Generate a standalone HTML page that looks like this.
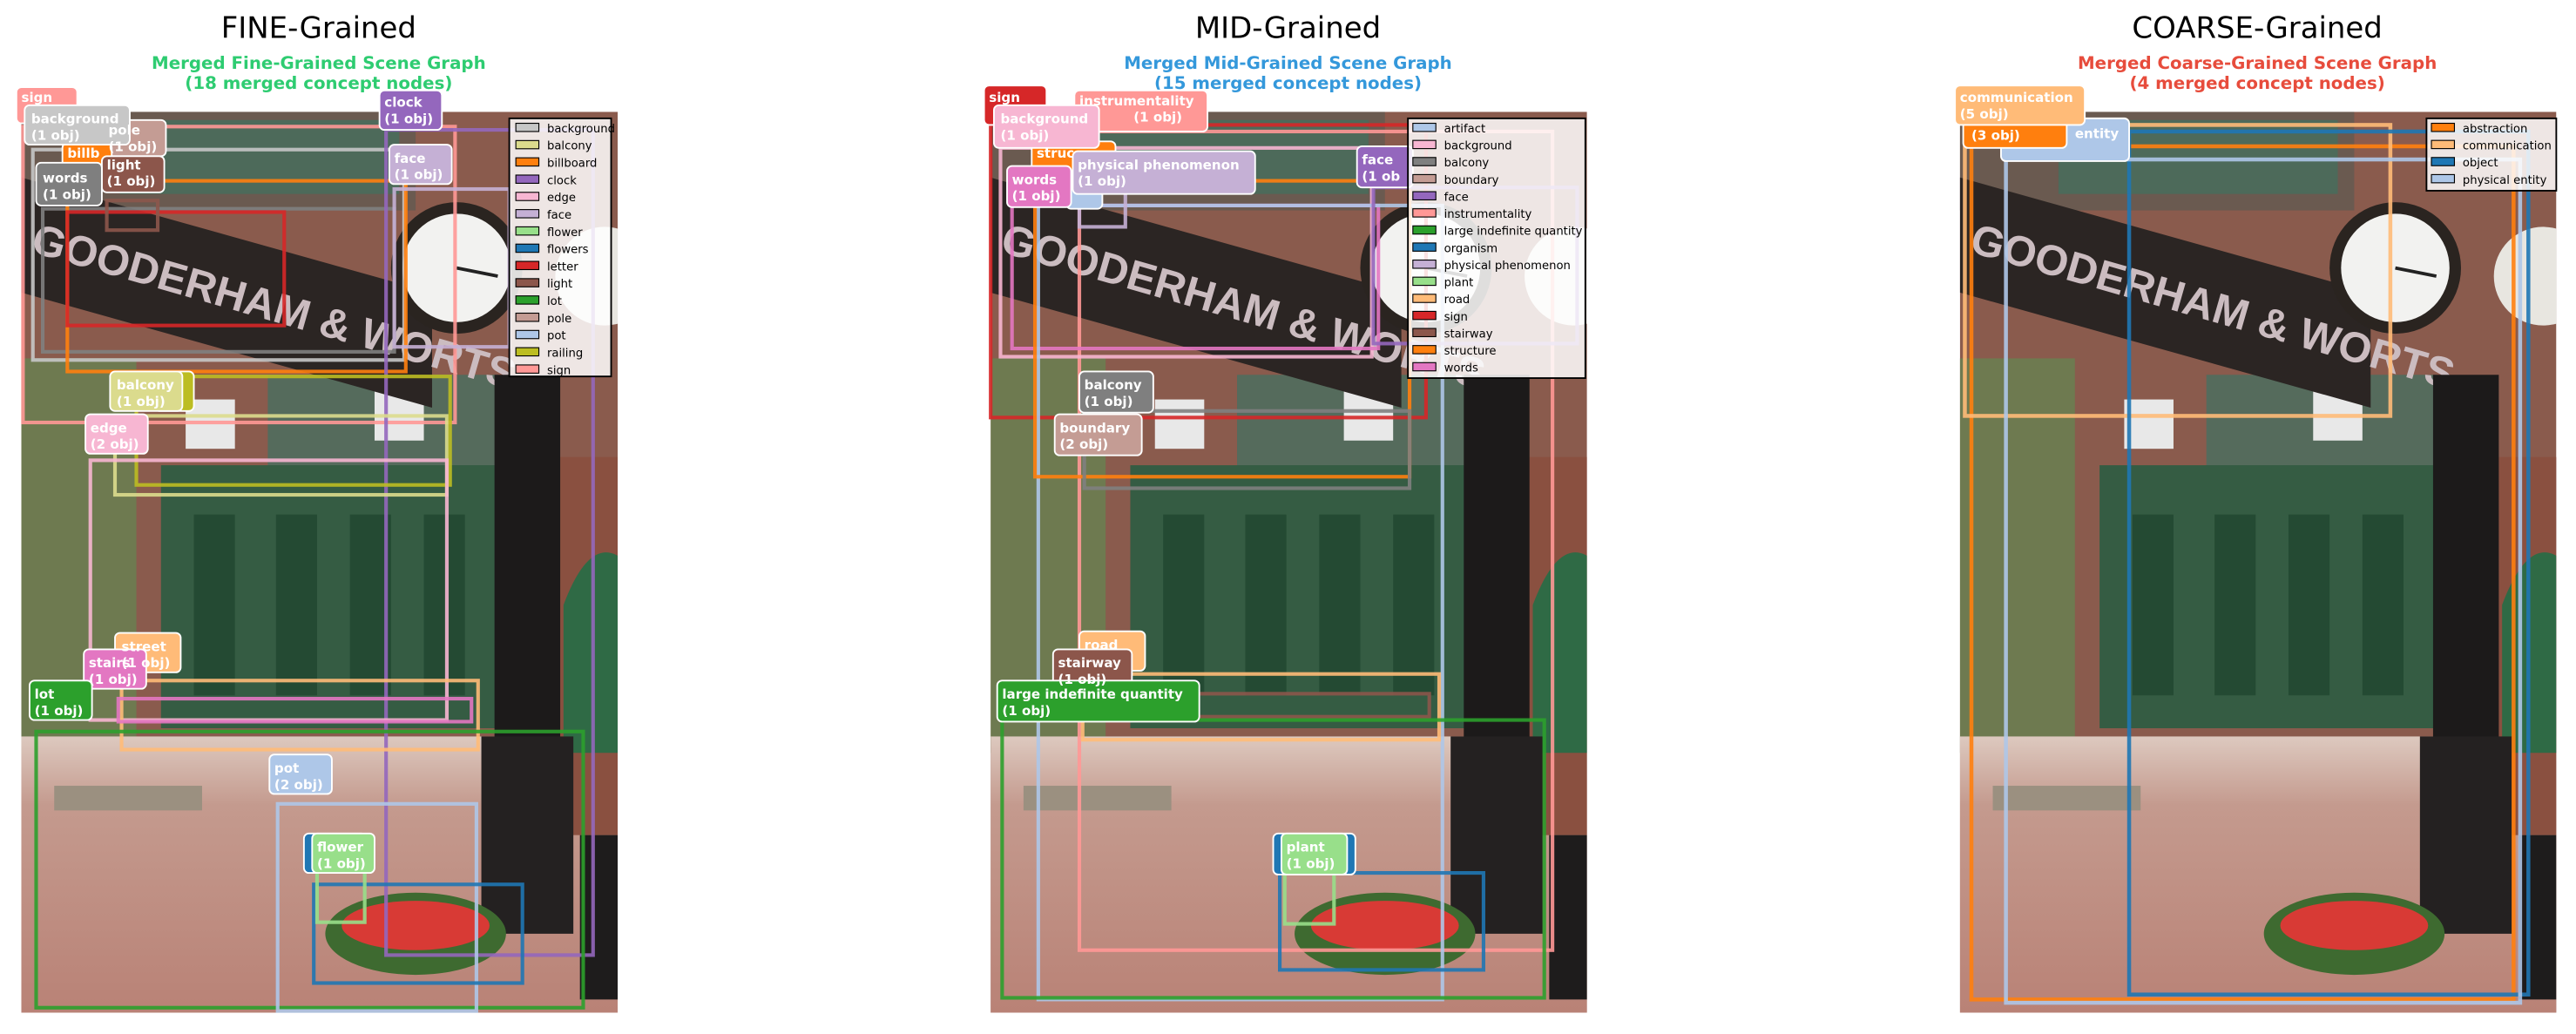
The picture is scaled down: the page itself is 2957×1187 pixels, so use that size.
<!DOCTYPE html>
<html><head><meta charset="utf-8"><style>html,body{margin:0;padding:0;background:#fff}svg{display:block}</style></head><body>
<svg width="2957" height="1187" viewBox="0 0 1568 629" preserveAspectRatio="none" xmlns="http://www.w3.org/2000/svg" font-family="DejaVu Sans, Liberation Sans, sans-serif">
<defs>
<linearGradient id="pave" x1="0" y1="0" x2="0" y2="1"><stop offset="0" stop-color="#ddc9bf"/><stop offset="0.25" stop-color="#c49a8e"/><stop offset="1" stop-color="#b98276"/></linearGradient>
<clipPath id="pc"><rect x="0" y="0" width="363" height="548"/></clipPath>
<g id="photo">
<g clip-path="url(#pc)">
<rect x="0" y="0" width="363" height="548" fill="#8a5b4d"/>
<rect x="0" y="0" width="240" height="60" fill="#6a5a50"/>
<rect x="60" y="5" width="170" height="45" fill="#4d6a5a"/>
<rect x="150" y="160" width="140" height="60" fill="#556b5c"/>
<rect x="100" y="175" width="30" height="30" fill="#e8e8e8"/>
<rect x="215" y="170" width="30" height="30" fill="#e8e8e8"/>
<polygon points="0,40 250,110 250,180 0,110" fill="#2b2523"/>
<text x="5" y="85" transform="rotate(16 5 85)" font-family="Liberation Sans Narrow, Liberation Sans, sans-serif" font-weight="bold" font-size="26" fill="#cbbcc0">GOODERHAM &amp; WORTS</text>
<rect x="0" y="150" width="70" height="240" fill="#6e7a50"/>
<rect x="85" y="215" width="230" height="160" fill="#355c43"/>
<rect x="105" y="245" width="25" height="110" fill="#244a33"/>
<rect x="155" y="245" width="25" height="110" fill="#244a33"/>
<rect x="200" y="245" width="25" height="110" fill="#244a33"/>
<rect x="245" y="245" width="25" height="110" fill="#244a33"/>
<rect x="0" y="380" width="363" height="168" fill="url(#pave)"/>
<rect x="320" y="210" width="43" height="230" fill="#8a5040"/>
<path d="M330,300 q15,-40 33,-30 v120 h-33z" fill="#2f6a45"/>
<circle cx="265" cy="95" r="40" fill="#2a2420"/>
<circle cx="265" cy="95" r="33" fill="#f2f2f0"/>
<line x1="265" y1="95" x2="290" y2="100" stroke="#222" stroke-width="2"/>
<circle cx="355" cy="100" r="30" fill="#e8e6e0"/>
<rect x="288" y="160" width="40" height="320" fill="#1c1a1a"/>
<rect x="280" y="380" width="56" height="120" fill="#242121"/>
<rect x="340" y="440" width="23" height="100" fill="#1e1c1c"/>
<ellipse cx="240" cy="500" rx="55" ry="25" fill="#3e6a30"/>
<ellipse cx="240" cy="495" rx="45" ry="15" fill="#d83a35"/>
<rect x="20" y="410" width="90" height="15" fill="#9b9080"/>
</g>
</g>
</defs>

<!-- Titles -->
<text x="194" y="23" font-size="18" text-anchor="middle" fill="#000">FINE-Grained</text>
<text x="194" y="42" font-size="10.5" font-weight="bold" text-anchor="middle" fill="#2ecc71">Merged Fine-Grained Scene Graph</text>
<text x="194" y="54" font-size="10.5" font-weight="bold" text-anchor="middle" fill="#2ecc71">(18 merged concept nodes)</text>
<text x="784" y="23" font-size="18" text-anchor="middle" fill="#000">MID-Grained</text>
<text x="784" y="42" font-size="10.5" font-weight="bold" text-anchor="middle" fill="#3498db">Merged Mid-Grained Scene Graph</text>
<text x="784" y="54" font-size="10.5" font-weight="bold" text-anchor="middle" fill="#3498db">(15 merged concept nodes)</text>
<text x="1374" y="23" font-size="18" text-anchor="middle" fill="#000">COARSE-Grained</text>
<text x="1374" y="42" font-size="10.5" font-weight="bold" text-anchor="middle" fill="#e74c3c">Merged Coarse-Grained Scene Graph</text>
<text x="1374" y="54" font-size="10.5" font-weight="bold" text-anchor="middle" fill="#e74c3c">(4 merged concept nodes)</text>

<use href="#photo" x="13" y="68"/>
<use href="#photo" x="603" y="68"/>
<use href="#photo" x="1193" y="68"/>

<!-- Panel 1 boxes -->
<g fill="none" stroke-width="2.2" stroke-opacity="0.9">
<rect x="14" y="77" width="263" height="180" stroke="#ff9896"/>
<rect x="20" y="91" width="226" height="128" stroke="#c7c7c7"/>
<rect x="26" y="127" width="214" height="87" stroke="#7f7f7f"/>
<rect x="41" y="110" width="206" height="116" stroke="#ff7f0e"/>
<rect x="41" y="129" width="132" height="69" stroke="#d62728"/>
<rect x="65" y="122" width="31" height="18" stroke="#8c564b"/>
<rect x="235" y="79" width="126" height="502" stroke="#9467bd"/>
<rect x="240" y="115" width="70" height="96" stroke="#c5b0d5"/>
<rect x="70" y="253" width="202" height="48" stroke="#dbdb8d"/>
<rect x="83" y="229" width="191" height="66" stroke="#bcbd22"/>
<rect x="55" y="280" width="217" height="158" stroke="#f7b6d2"/>
<rect x="74" y="414" width="217" height="42" stroke="#ffbb78"/>
<rect x="72" y="425" width="215" height="14" stroke="#e377c2"/>
<rect x="22" y="445" width="333" height="168" stroke="#2ca02c"/>
<rect x="169" y="489" width="121" height="126" stroke="#aec7e8"/>
<rect x="191" y="538" width="127" height="60" stroke="#1f77b4"/>
<rect x="193" y="530" width="29" height="31" stroke="#98df8a"/>
</g>
<!-- Panel 2 boxes -->
<g fill="none" stroke-width="2.2" stroke-opacity="0.9">
<rect x="603" y="76" width="265" height="178" stroke="#d62728"/>
<rect x="657" y="80" width="288" height="498" stroke="#ff9896"/>
<rect x="609" y="90" width="226" height="127" stroke="#f7b6d2"/>
<rect x="616" y="125" width="223" height="87" stroke="#e377c2"/>
<rect x="632" y="125" width="246" height="483" stroke="#aec7e8"/>
<rect x="630" y="110" width="228" height="180" stroke="#ff7f0e"/>
<rect x="657" y="117" width="28" height="21" stroke="#c5b0d5"/>
<rect x="836" y="114" width="124" height="95" stroke="#9467bd"/>
<rect x="660" y="250" width="198" height="47" stroke="#7f7f7f"/>
<rect x="659" y="410" width="217" height="40" stroke="#ffbb78"/>
<rect x="643" y="422" width="227" height="14" stroke="#8c564b"/>
<rect x="610" y="438" width="330" height="169" stroke="#2ca02c"/>
<rect x="779" y="531" width="124" height="59" stroke="#1f77b4"/>
<rect x="782" y="530" width="30" height="32" stroke="#98df8a"/>
</g>
<!-- Panel 3 boxes -->
<g fill="none" stroke-width="2.4" stroke-opacity="0.9">
<rect x="1200" y="89" width="330" height="519" stroke="#ff7f0e"/>
<rect x="1196" y="76" width="259" height="177" stroke="#ffbb78"/>
<rect x="1296" y="80" width="243" height="525" stroke="#1f77b4"/>
<rect x="1221" y="97" width="313" height="513" stroke="#aec7e8"/>
</g>

<!-- Labels -->
<g font-size="8" font-weight="bold" fill="#fff" stroke="none">
<g stroke="#fff" stroke-width="1">
<rect x="10" y="53" width="37" height="22" rx="3" fill="#ff9896"/>
<rect x="63" y="73" width="38" height="22" rx="3" fill="#c49c94"/>
<rect x="38" y="87" width="30" height="20" rx="3" fill="#ff7f0e"/>
<rect x="62" y="95" width="38" height="22" rx="3" fill="#8c564b"/>
<rect x="15" y="64" width="64" height="24" rx="3" fill="#c7c7c7"/>
<rect x="22" y="99" width="40" height="26" rx="3" fill="#7f7f7f"/>
<rect x="231" y="55" width="38" height="24" rx="3" fill="#9467bd"/>
<rect x="237" y="88" width="38" height="24" rx="3" fill="#c5b0d5"/>
<rect x="94" y="226" width="24" height="24" rx="3" fill="#bcbd22"/>
<rect x="67" y="226" width="44" height="24" rx="3" fill="#dbdb8d"/>
<rect x="52" y="252" width="38" height="24" rx="3" fill="#f7b6d2"/>
<rect x="70" y="385" width="40" height="24" rx="3" fill="#ffbb78"/>
<rect x="51" y="395" width="38" height="24" rx="3" fill="#e377c2"/>
<rect x="18" y="414" width="38" height="24" rx="3" fill="#2ca02c"/>
<rect x="164" y="459" width="38" height="24" rx="3" fill="#aec7e8"/>
<rect x="185" y="507" width="38" height="24" rx="3" fill="#1f77b4"/>
<rect x="190" y="507" width="38" height="24" rx="3" fill="#98df8a"/>
</g>
<text x="13" y="62">sign</text>
<text x="66" y="82">pole</text><text x="66" y="92">(1 obj)</text>
<text x="41" y="96">billb</text>
<text x="65" y="103">light</text><text x="65" y="113">(1 obj)</text>
<text x="19" y="75">background</text><text x="19" y="85">(1 obj)</text>
<text x="26" y="111">words</text><text x="26" y="121">(1 obj)</text>
<text x="234" y="65">clock</text><text x="234" y="75">(1 obj)</text>
<text x="240" y="99">face</text><text x="240" y="109">(1 obj)</text>
<text x="71" y="237">balcony</text><text x="71" y="247">(1 obj)</text>
<text x="55" y="263">edge</text><text x="55" y="273">(2 obj)</text>
<text x="74" y="396">street</text><text x="74" y="406">(1 obj)</text>
<text x="54" y="406">stairs</text><text x="54" y="416">(1 obj)</text>
<text x="21" y="425">lot</text><text x="21" y="435">(1 obj)</text>
<text x="167" y="470">pot</text><text x="167" y="480">(2 obj)</text>
<text x="193" y="518">flower</text><text x="193" y="528">(1 obj)</text>

<g stroke="#fff" stroke-width="1">
<rect x="599" y="52" width="38" height="24" rx="3" fill="#d62728"/>
<rect x="654" y="55" width="81" height="25" rx="3" fill="#ff9896"/>
<rect x="628" y="86" width="51" height="20" rx="3" fill="#ff7f0e"/>
<rect x="605" y="64" width="64" height="26" rx="3" fill="#f7b6d2"/>
<rect x="649" y="110" width="22" height="17" rx="3" fill="#aec7e8"/>
<rect x="653" y="92" width="111" height="26" rx="3" fill="#c5b0d5"/>
<rect x="613" y="101" width="39" height="25" rx="3" fill="#e377c2"/>
<rect x="826" y="89" width="34" height="25" rx="3" fill="#9467bd"/>
<rect x="657" y="226" width="45" height="25" rx="3" fill="#7f7f7f"/>
<rect x="642" y="252" width="53" height="25" rx="3" fill="#c49c94"/>
<rect x="657" y="384" width="40" height="24" rx="3" fill="#ffbb78"/>
<rect x="641" y="395" width="48" height="25" rx="3" fill="#8c564b"/>
<rect x="607" y="414" width="123" height="25" rx="3" fill="#2ca02c"/>
<rect x="775" y="507" width="50" height="25" rx="3" fill="#1f77b4"/>
<rect x="780" y="507" width="40" height="25" rx="3" fill="#98df8a"/>
</g>
<text x="602" y="62">sign</text>
<text x="657" y="64">instrumentality</text><text x="690" y="74">(1 obj)</text>
<text x="631" y="96">struc</text>
<text x="609" y="75">background</text><text x="609" y="85">(1 obj)</text>
<text x="656" y="103">physical phenomenon</text><text x="656" y="113">(1 obj)</text>
<text x="616" y="112">words</text><text x="616" y="122">(1 obj)</text>
<text x="829" y="100">face</text><text x="829" y="110">(1 ob</text>
<text x="660" y="237">balcony</text><text x="660" y="247">(1 obj)</text>
<text x="645" y="263">boundary</text><text x="645" y="273">(2 obj)</text>
<text x="660" y="395">road</text>
<text x="644" y="406">stairway</text><text x="644" y="416">(1 obj)</text>
<text x="610" y="425">large indefinite quantity</text><text x="610" y="435">(1 obj)</text>
<text x="783" y="518">plant</text><text x="783" y="528">(1 obj)</text>

<g stroke="#fff" stroke-width="1">
<rect x="1218" y="72" width="78" height="26" rx="3" fill="#aec7e8"/>
<rect x="1195" y="72" width="63" height="18" rx="3" fill="#ff7f0e"/>
<rect x="1190" y="52" width="79" height="24" rx="3" fill="#ffbb78"/>
</g>
<text x="1193" y="62">communication</text><text x="1193" y="72">(5 obj)</text>
<text x="1200" y="85">(3 obj)</text>
<text x="1263" y="84">entity</text>
</g>

<!-- Legends -->
<g font-size="7" fill="#000">
<rect x="310" y="72" width="62" height="157" fill="#fff" fill-opacity="0.85" stroke="#000" stroke-width="1"/>
<g stroke="#000" stroke-width="0.6">
<rect x="314" y="75" width="14" height="5" fill="#c7c7c7"/>
<rect x="314" y="85.5" width="14" height="5" fill="#dbdb8d"/>
<rect x="314" y="96" width="14" height="5" fill="#ff7f0e"/>
<rect x="314" y="106.5" width="14" height="5" fill="#9467bd"/>
<rect x="314" y="117" width="14" height="5" fill="#f7b6d2"/>
<rect x="314" y="127.5" width="14" height="5" fill="#c5b0d5"/>
<rect x="314" y="138" width="14" height="5" fill="#98df8a"/>
<rect x="314" y="148.5" width="14" height="5" fill="#1f77b4"/>
<rect x="314" y="159" width="14" height="5" fill="#d62728"/>
<rect x="314" y="169.5" width="14" height="5" fill="#8c564b"/>
<rect x="314" y="180" width="14" height="5" fill="#2ca02c"/>
<rect x="314" y="190.5" width="14" height="5" fill="#c49c94"/>
<rect x="314" y="201" width="14" height="5" fill="#aec7e8"/>
<rect x="314" y="211.5" width="14" height="5" fill="#bcbd22"/>
<rect x="314" y="222" width="14" height="5" fill="#ff9896"/>
</g>
<text x="333" y="80.5">background</text><text x="333" y="91">balcony</text><text x="333" y="101.5">billboard</text><text x="333" y="112">clock</text><text x="333" y="122.5">edge</text><text x="333" y="133">face</text><text x="333" y="143.5">flower</text><text x="333" y="154">flowers</text><text x="333" y="164.5">letter</text><text x="333" y="175">light</text><text x="333" y="185.5">lot</text><text x="333" y="196">pole</text><text x="333" y="206.5">pot</text><text x="333" y="217">railing</text><text x="333" y="227.5">sign</text>

<rect x="857" y="72" width="108" height="158" fill="#fff" fill-opacity="0.85" stroke="#000" stroke-width="1"/>
<g stroke="#000" stroke-width="0.6">
<rect x="860" y="75" width="14" height="5" fill="#aec7e8"/>
<rect x="860" y="85.4" width="14" height="5" fill="#f7b6d2"/>
<rect x="860" y="95.8" width="14" height="5" fill="#7f7f7f"/>
<rect x="860" y="106.2" width="14" height="5" fill="#c49c94"/>
<rect x="860" y="116.6" width="14" height="5" fill="#9467bd"/>
<rect x="860" y="127" width="14" height="5" fill="#ff9896"/>
<rect x="860" y="137.4" width="14" height="5" fill="#2ca02c"/>
<rect x="860" y="147.8" width="14" height="5" fill="#1f77b4"/>
<rect x="860" y="158.2" width="14" height="5" fill="#c5b0d5"/>
<rect x="860" y="168.6" width="14" height="5" fill="#98df8a"/>
<rect x="860" y="179" width="14" height="5" fill="#ffbb78"/>
<rect x="860" y="189.4" width="14" height="5" fill="#d62728"/>
<rect x="860" y="199.8" width="14" height="5" fill="#8c564b"/>
<rect x="860" y="210.2" width="14" height="5" fill="#ff7f0e"/>
<rect x="860" y="220.6" width="14" height="5" fill="#e377c2"/>
</g>
<text x="879" y="80.5">artifact</text><text x="879" y="90.9">background</text><text x="879" y="101.3">balcony</text><text x="879" y="111.7">boundary</text><text x="879" y="122.1">face</text><text x="879" y="132.5">instrumentality</text><text x="879" y="142.9">large indefinite quantity</text><text x="879" y="153.3">organism</text><text x="879" y="163.7">physical phenomenon</text><text x="879" y="174.1">plant</text><text x="879" y="184.5">road</text><text x="879" y="194.9">sign</text><text x="879" y="205.3">stairway</text><text x="879" y="215.7">structure</text><text x="879" y="226.1">words</text>

<rect x="1477" y="72" width="79" height="44" fill="#fff" fill-opacity="0.85" stroke="#000" stroke-width="1"/>
<g stroke="#000" stroke-width="0.6">
<rect x="1480" y="75" width="14" height="5" fill="#ff7f0e"/>
<rect x="1480" y="85.4" width="14" height="5" fill="#ffbb78"/>
<rect x="1480" y="95.8" width="14" height="5" fill="#1f77b4"/>
<rect x="1480" y="106.2" width="14" height="5" fill="#aec7e8"/>
</g>
<text x="1499" y="80.5">abstraction</text><text x="1499" y="90.9">communication</text><text x="1499" y="101.3">object</text><text x="1499" y="111.7">physical entity</text>
</g>
</svg>
</body></html>
